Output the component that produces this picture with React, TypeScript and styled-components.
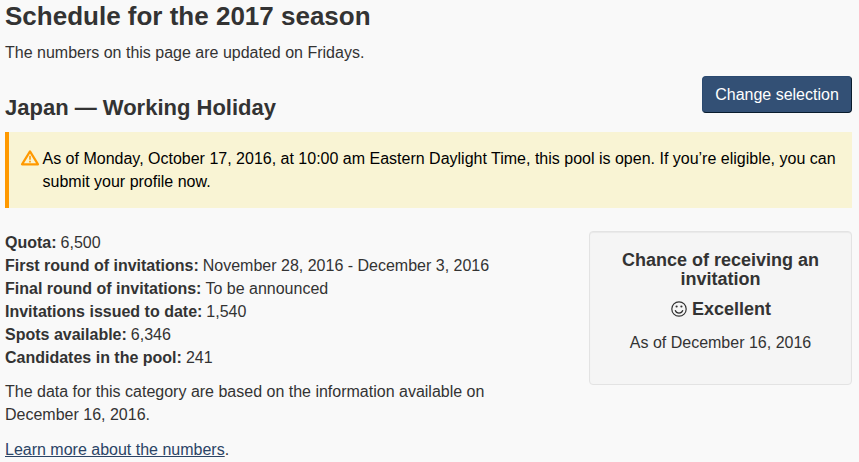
import React from "react";
import styled, { createGlobalStyle } from "styled-components";

const Global = createGlobalStyle`
  *{box-sizing:border-box}
  html{background:#f9f9f9}
  body{margin:0;height:462px;overflow:hidden;background:#f9f9f9;color:#333;font:16px/23px "Liberation Sans",Arial,sans-serif}
`;
const Page = styled.main`padding:2px 7px 0 5px;`;
const Title = styled.h1`margin:0;font-size:26px;line-height:29px;`;
const Intro = styled.p`margin:10px 0 0;`;
const Header = styled.div`display:flex;justify-content:space-between;margin-top:12px;height:56px;`;
const Category = styled.h2`margin:19px 0 0;font-size:22px;line-height:26px;`;
const Button = styled.button`width:150px;height:37px;padding:0;border:1px solid;border-color:#2b4a70 #091c2d #091c2d #2b4a70;border-radius:4px;background:#335075;color:#fff;font:inherit;`;
const Alert = styled.section`display:flex;height:76px;padding:15px 10px 0 12px;border-left:4px solid #f90;background:#f9f4d4;color:#000;
  svg{flex:none;margin:2px 2.5px 0 -1px}
  p{margin:0}
`;
const Columns = styled.div`display:flex;justify-content:space-between;margin-top:23px;`;
const Details = styled.div`width:500px;`;
const Facts = styled.dl`margin:0;
  div{display:flex;gap:4px}
  dt{font-weight:700}
  dd{margin:0}
`;
const Note = styled.p`margin:11px 0 0;`;
const More = styled(Note)`margin-top:12px;`;
const Link = styled.a`color:#2b4466;text-underline-offset:1px;text-decoration-thickness:1px;text-decoration-skip-ink:none;`;
const Chance = styled.aside`width:263px;height:154px;padding:19px 19px 0;border:1px solid #e3e3e3;border-radius:4px;background:#f5f5f5;box-shadow:inset 0 1px 1px rgba(0,0,0,.05);text-align:center;
  h3{margin:0;font-size:18px;line-height:19px}
  p{margin:12px 0 0}
`;
const Rating = styled.div`display:flex;justify-content:center;align-items:center;gap:5px;margin-top:10px;padding-left:1px;font-size:18px;font-weight:700;line-height:20px;`;

const facts = [
  ["Quota:", "6,500"],
  ["First round of invitations:", "November 28, 2016 - December 3, 2016"],
  ["Final round of invitations:", "To be announced"],
  ["Invitations issued to date:", "1,540"],
  ["Spots available:", "6,346"],
  ["Candidates in the pool:", "241"],
];

const WarningIcon = () => (
  <svg width="20" height="18" viewBox="0 0 20 18" fill="none" stroke="#f90" strokeLinejoin="round">
    <path d="M10 2.4 18 15.3H2Z" strokeWidth="2.2" />
    <path d="M10 6.8v4M10 11.8v1.7" strokeWidth="1.6" />
  </svg>
);
const SmileIcon = () => (
  <svg width="16" height="16" viewBox="0 0 16 16" fill="none" stroke="#333" strokeWidth="1.2" strokeLinecap="round">
    <circle cx="8" cy="8" r="7.2" />
    <path d="M4.3 9.5c1.1 3.4 6.3 3.4 7.4 0" />
    <circle cx="5.6" cy="5.5" r="1.1" fill="#333" stroke="none" />
    <circle cx="10.4" cy="5.5" r="1.1" fill="#333" stroke="none" />
  </svg>
);

export default function App() {
  return (
    <>
      <Global />
      <Page>
        <Title>Schedule for the 2017 season</Title>
        <Intro>The numbers on this page are updated on Fridays.</Intro>
        <Header>
          <Category>Japan — Working Holiday</Category>
          <Button>Change selection</Button>
        </Header>
        <Alert>
          <WarningIcon />
          <p>As of Monday, October 17, 2016, at 10:00 am Eastern Daylight Time, this pool is open. If you’re eligible, you can submit your profile now.</p>
        </Alert>
        <Columns>
          <Details>
            <Facts>{facts.map(([k, v]) => <div key={k}><dt>{k}</dt><dd>{v}</dd></div>)}</Facts>
            <Note>The data for this category are based on the information available on December 16, 2016.</Note>
            <More><Link href="#">Learn more about the numbers</Link>.</More>
          </Details>
          <Chance>
            <h3>Chance of receiving an invitation</h3>
            <Rating><SmileIcon />Excellent</Rating>
            <p>As of December 16, 2016</p>
          </Chance>
        </Columns>
      </Page>
    </>
  );
}
